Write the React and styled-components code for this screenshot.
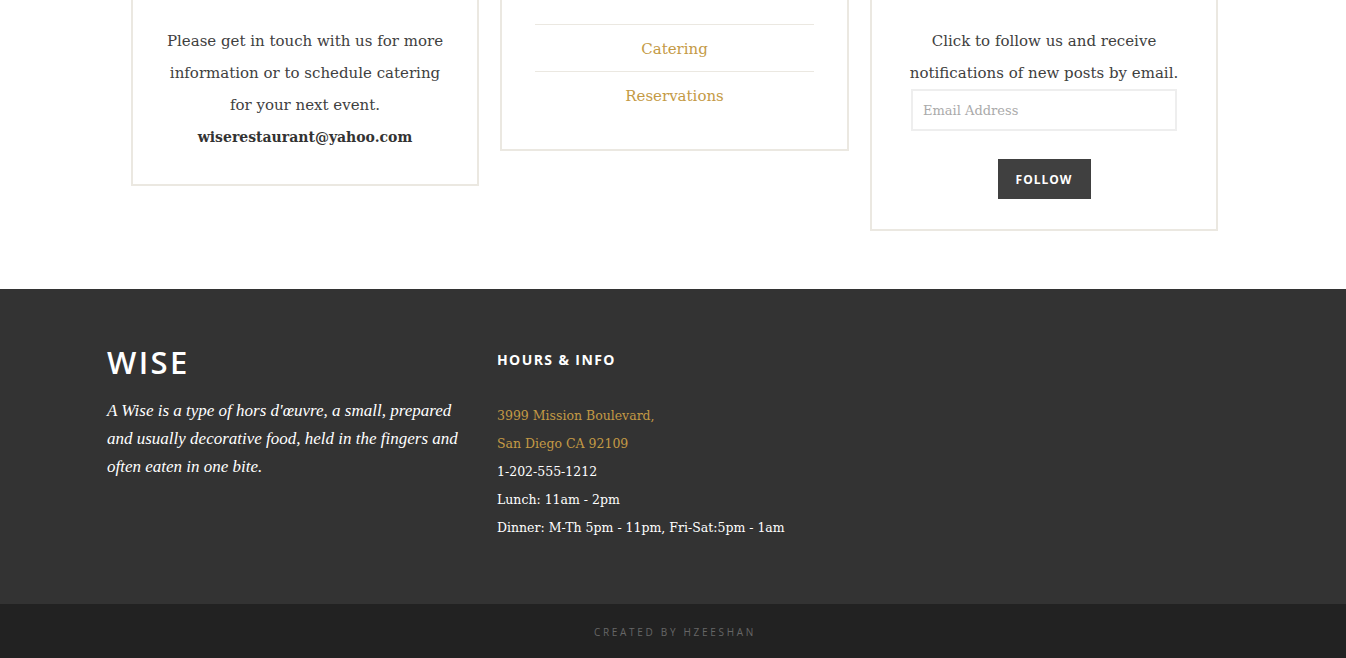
import React from "react";
import styled, { createGlobalStyle } from "styled-components";

const Global = createGlobalStyle`
  * { box-sizing: border-box; }
  html, body { margin: 0; padding: 0; background: #fff; }
  body { font-family: "DejaVu Serif", serif; overflow: hidden; }
`;

const Page = styled.div`
  width: 1346px;
  height: 658px;
  overflow: hidden;
  display: flex;
  flex-direction: column;
`;

const Widgets = styled.section`
  display: grid;
  grid-template-columns: 348px 349px 348px;
  column-gap: 21px;
  justify-content: start;
  align-items: start;
  margin-top: -22px;
  height: 311px;
  padding-left: 131px;
`;

const Card = styled.div`
  border: 2px solid #ebe8e1;
  padding: 45px 30px ${(p) => p.$bottom || 31}px;
  text-align: center;
  color: #404040;
  font-family: "DejaVu Serif", serif;
  font-size: 15px;
  line-height: 32px;
`;

const Para = styled.p`
  margin: 0;
`;

const Email = styled.a`
  display: block;
  font-weight: 700;
  font-size: 14px;
  color: #333;
  text-decoration: none;
`;

const LinkList = styled.ul`
  list-style: none;
  margin: -1px 3px 0;
  padding: 0;
`;

const LinkItem = styled.li`
  border-top: 1px solid #ebe8e1;
  padding-top: 2px;
  line-height: 44px;
  a {
    color: #c49a45;
    text-decoration: none;
  }
`;

const EmailInput = styled.input`
  display: block;
  width: 266px;
  height: 42px;
  margin: 0 auto;
  border: 2px solid #eeeeee;
  padding: 0 10px;
  font-family: "DejaVu Serif", serif;
  font-size: 13px;
  color: #404040;
  outline: none;
  &::placeholder { color: #aaa; }
`;

const FollowButton = styled.button`
  display: block;
  margin: 28px auto 0;
  width: 93px;
  height: 40px;
  background: #404040;
  color: #fff;
  border: none;
  font-family: "Open Sans", sans-serif;
  font-weight: 700;
  font-size: 12px;
  letter-spacing: 1px;
  text-transform: uppercase;
  padding: 0;
`;

const Footer = styled.footer`
  background: #333333;
  height: 315px;
  padding: 53px 107px 0;
  display: grid;
  grid-template-columns: 390px 1fr;
  align-items: start;
`;

const Brand = styled.h2`
  margin: 0;
  font-family: "Open Sans", sans-serif;
  font-weight: 600;
  font-size: 31px;
  line-height: 40px;
  letter-spacing: 2.4px;
  color: #fff;
`;

const Blurb = styled.p`
  margin: 15px 0 0;
  width: 352px;
  font-family: "Liberation Serif", serif;
  font-style: italic;
  font-size: 17px;
  line-height: 28px;
  color: #fff;
`;

const ColTitle = styled.h3`
  margin: 8px 0 0;
  font-family: "Open Sans", sans-serif;
  font-weight: 700;
  font-size: 14px;
  line-height: 20px;
  letter-spacing: 1.4px;
  color: #fff;
  text-transform: uppercase;
`;

const InfoList = styled.ul`
  list-style: none;
  margin: 32px 0 0;
  padding: 0;
`;

const InfoItem = styled.li`
  font-family: "DejaVu Serif", serif;
  font-size: 12.5px;
  line-height: 28px;
  color: ${(p) => (p.$gold ? "#c49a45" : "#fff")};
`;

const BottomBar = styled.div`
  background: #222222;
  height: 54px;
  display: flex;
  align-items: center;
  justify-content: center;
  padding-top: 2px;
  padding-left: 4px;
  font-family: "Open Sans", sans-serif;
  font-size: 10px;
  letter-spacing: 2.7px;
  color: #666;
  text-transform: uppercase;
`;

export default function App() {
  return (
    <Page>
      <Global />
      <Widgets>
        <Card>
          <Para>
            Please get in touch with us for more information or to schedule
            catering for your next event.
          </Para>
          <Email href="#">wiserestaurant@yahoo.com</Email>
        </Card>
        <Card>
          <LinkList>
            <LinkItem>
              <a href="#">Catering</a>
            </LinkItem>
            <LinkItem>
              <a href="#">Reservations</a>
            </LinkItem>
          </LinkList>
        </Card>
        <Card $bottom={30}>
          <Para>
            Click to follow us and receive notifications of new posts by
            email.
          </Para>
          <EmailInput type="email" placeholder="Email Address" />
          <FollowButton>Follow</FollowButton>
        </Card>
      </Widgets>
      <Footer>
        <div>
          <Brand>WISE</Brand>
          <Blurb>
            A Wise is a type of hors d'œuvre, a small, prepared and usually
            decorative food, held in the fingers and often eaten in one bite.
          </Blurb>
        </div>
        <div>
          <ColTitle>Hours &amp; Info</ColTitle>
          <InfoList>
            <InfoItem $gold>3999 Mission Boulevard,</InfoItem>
            <InfoItem $gold>San Diego CA 92109</InfoItem>
            <InfoItem>1-202-555-1212</InfoItem>
            <InfoItem>Lunch: 11am - 2pm</InfoItem>
            <InfoItem>Dinner: M-Th 5pm - 11pm, Fri-Sat:5pm - 1am</InfoItem>
          </InfoList>
        </div>
      </Footer>
      <BottomBar>Created by hzeeshan</BottomBar>
    </Page>
  );
}
